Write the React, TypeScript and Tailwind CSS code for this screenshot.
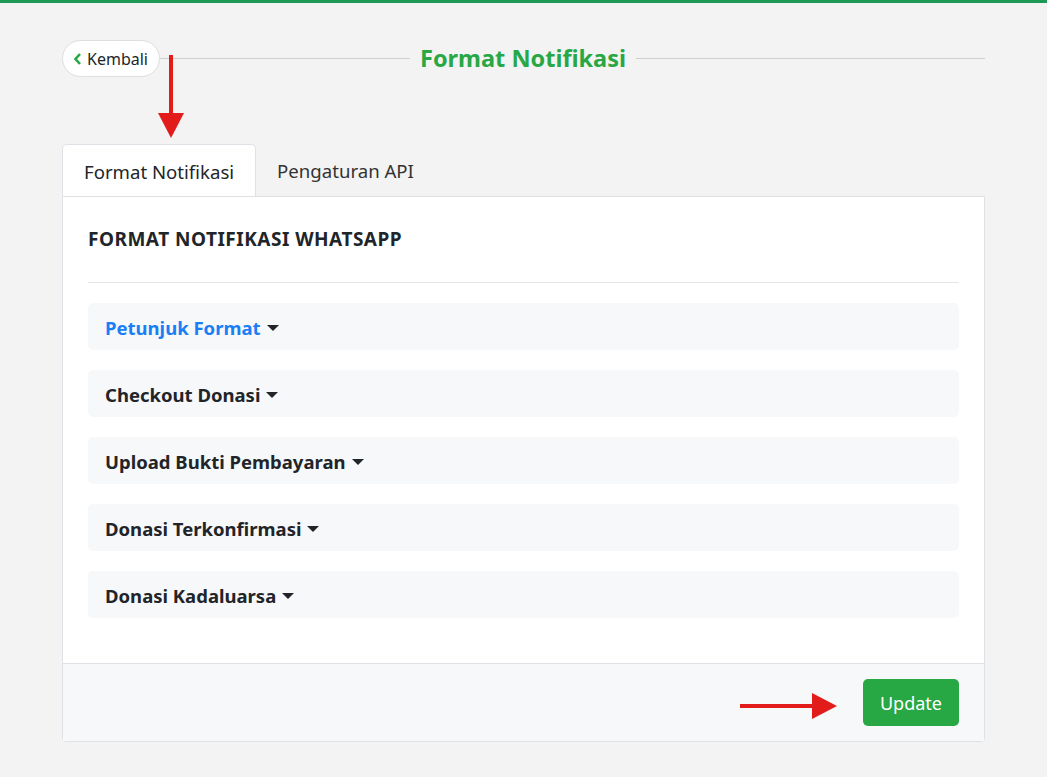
import React from 'react';

const sections = [
  { label: 'Petunjuk Format', active: true },
  { label: 'Checkout Donasi' },
  { label: 'Upload Bukti Pembayaran' },
  { label: 'Donasi Terkonfirmasi' },
  { label: 'Donasi Kadaluarsa' },
];

function Caret() {
  return (
    <svg width="12" height="8" viewBox="0 0 12 8" className="ml-[6px] inline-block text-[#212529]">
      <path d="M0 1 L12 1 L6 7 Z" fill="currentColor" />
    </svg>
  );
}

function ArrowDown() {
  return (
    <svg width="26" height="84" viewBox="0 0 26 84" className="pointer-events-none absolute left-[96px] top-[15px]">
      <rect x="11" y="0" width="4" height="62" fill="#e21b1b" />
      <path d="M0 58 L26 58 L13 83 Z" fill="#e21b1b" />
    </svg>
  );
}

function ArrowRight() {
  return (
    <svg width="98" height="26" viewBox="0 0 98 26" className="mr-[25px] translate-y-[4px]">
      <rect x="0" y="11" width="74" height="4" fill="#e21b1b" />
      <path d="M72 0 L97 13 L72 26 Z" fill="#e21b1b" />
    </svg>
  );
}

export default function App() {
  return (
    <div
      className="min-h-[777px] border-t-[3px] border-[#1c9a55] bg-[#f3f3f3] text-[#212529]"
      style={{ fontFamily: '"Noto Sans", "Open Sans", sans-serif' }}
    >
      <div className="mx-[62px] pt-[37px]">
        {/* header row */}
        <div className="relative flex items-center">
          <button className="flex h-[37px] items-center rounded-full border border-[#dedede] bg-white pl-[10px] pr-[11px] text-[16px]">
            <svg width="9" height="12" viewBox="0 0 9 12" className="mr-[5px]">
              <path d="M7 1 L2.5 6 L7 11" stroke="#28a745" strokeWidth="2.6" fill="none" />
            </svg>
            Kembali
          </button>
          <div className="h-px flex-1 bg-[#cfcfcf]" />
          <h1 className="px-[10px] text-[23.5px] font-bold text-[#28a745]">Format Notifikasi</h1>
          <div className="h-px w-[349px] bg-[#cfcfcf]" />
          <ArrowDown />
        </div>

        {/* tabs */}
        <div className="mt-[67px] flex text-[18.6px]">
          <div className="rounded-t-[5px] border border-b-0 border-[#dee2e6] bg-white px-[21px] pb-[10px] pt-[13px]">
            Format Notifikasi
          </div>
          <div className="px-[21px] pb-[10px] pt-[13px] text-[#333]">Pengaturan API</div>
        </div>

        {/* card */}
        <div className="rounded-b-[4px] border border-[#dee2e6] bg-white">
          <div className="px-[25px] pb-[45px] pt-[31px]">
            <h2 className="text-[19px] font-bold leading-[22px] tracking-[0.5px]">FORMAT NOTIFIKASI WHATSAPP</h2>
            <div className="mt-[32px] h-px bg-[#e5e5e5]" />
            <div className="mt-[20px] flex flex-col gap-[20px]">
              {sections.map((s) => (
                <div
                  key={s.label}
                  className={`flex h-[47px] items-center rounded-[5px] bg-[#f7f8fa] px-[17px] pt-[3px] text-[18.5px] font-bold ${
                    s.active ? 'text-[#1a7ff5]' : 'text-[#212529]'
                  }`}
                >
                  {s.label}
                  <Caret />
                </div>
              ))}
            </div>
          </div>
          <div className="flex h-[78px] items-center justify-end border-t border-[#dee2e6] bg-[#f7f8fa] px-[25px]">
            <ArrowRight />
            <button className="h-[47px] rounded-[5px] bg-[#28a745] px-[17px] pt-[3px] text-[18px] text-white">Update</button>
          </div>
        </div>
      </div>
    </div>
  );
}
